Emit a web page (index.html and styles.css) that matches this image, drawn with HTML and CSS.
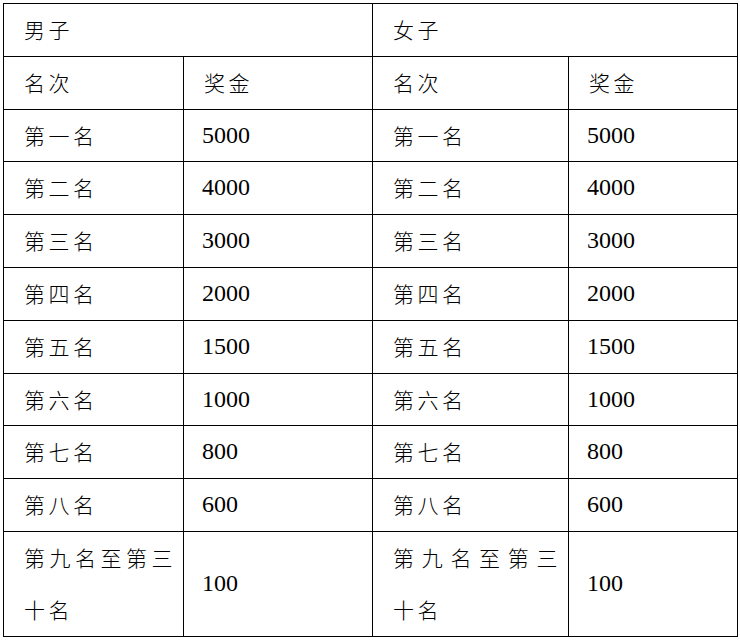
FILE: index.html
```html
<!DOCTYPE html>
<html lang="zh-CN">
<head>
<meta charset="utf-8">
<title>奖金</title>
<link rel="stylesheet" href="styles.css">
</head>
<body>
<table class="prize">
  <colgroup>
    <col class="c1"><col class="c2"><col class="c3"><col class="c4">
  </colgroup>
  <tr><td colspan="2">男子</td><td colspan="2">女子</td></tr>
  <tr><td>名次</td><td>奖金</td><td>名次</td><td>奖金</td></tr>
  <tr><td>第一名</td><td class="num">5000</td><td>第一名</td><td class="num">5000</td></tr>
  <tr><td>第二名</td><td class="num">4000</td><td>第二名</td><td class="num">4000</td></tr>
  <tr><td>第三名</td><td class="num">3000</td><td>第三名</td><td class="num">3000</td></tr>
  <tr><td>第四名</td><td class="num">2000</td><td>第四名</td><td class="num">2000</td></tr>
  <tr><td>第五名</td><td class="num">1500</td><td>第五名</td><td class="num">1500</td></tr>
  <tr><td>第六名</td><td class="num">1000</td><td>第六名</td><td class="num">1000</td></tr>
  <tr><td>第七名</td><td class="num">800</td><td>第七名</td><td class="num">800</td></tr>
  <tr><td>第八名</td><td class="num">600</td><td>第八名</td><td class="num">600</td></tr>
  <tr><td class="wrap">第九名至第三十名</td><td class="num">100</td><td class="wrap">第九名至第三十名</td><td class="num">100</td></tr>
</table>
</body>
</html>
```

FILE: styles.css
```css
html, body {
  margin: 0;
  padding: 0;
  background: #ffffff;
}
body {
  padding: 3px 0 0 3px;
}
.prize {
  border-collapse: collapse;
  table-layout: fixed;
  width: 734px;
  font-family: "Noto Sans CJK SC", sans-serif;
  color: #000;
}
.c1 { width: 180px; }
.c2 { width: 189px; }
.c3 { width: 196px; }
.c4 { width: 169px; }
.prize td {
  border: 1px solid #000;
  height: 51.8px;
  padding: 0 8px 0 20px;
  font-size: 21px;
  font-weight: 300;
  letter-spacing: 3.5px;
  line-height: 51.8px;
  vertical-align: middle;
  text-align: left;
}
.prize td.num {
  font-family: "Liberation Serif", "Tinos", "Times New Roman", serif;
  font-weight: 400;
  font-size: 24px;
  letter-spacing: 0;
  padding-left: 18px;
}
.prize td.wrap {
  padding-right: 7px;
  text-align: justify;
  text-align-last: left;
}
```
